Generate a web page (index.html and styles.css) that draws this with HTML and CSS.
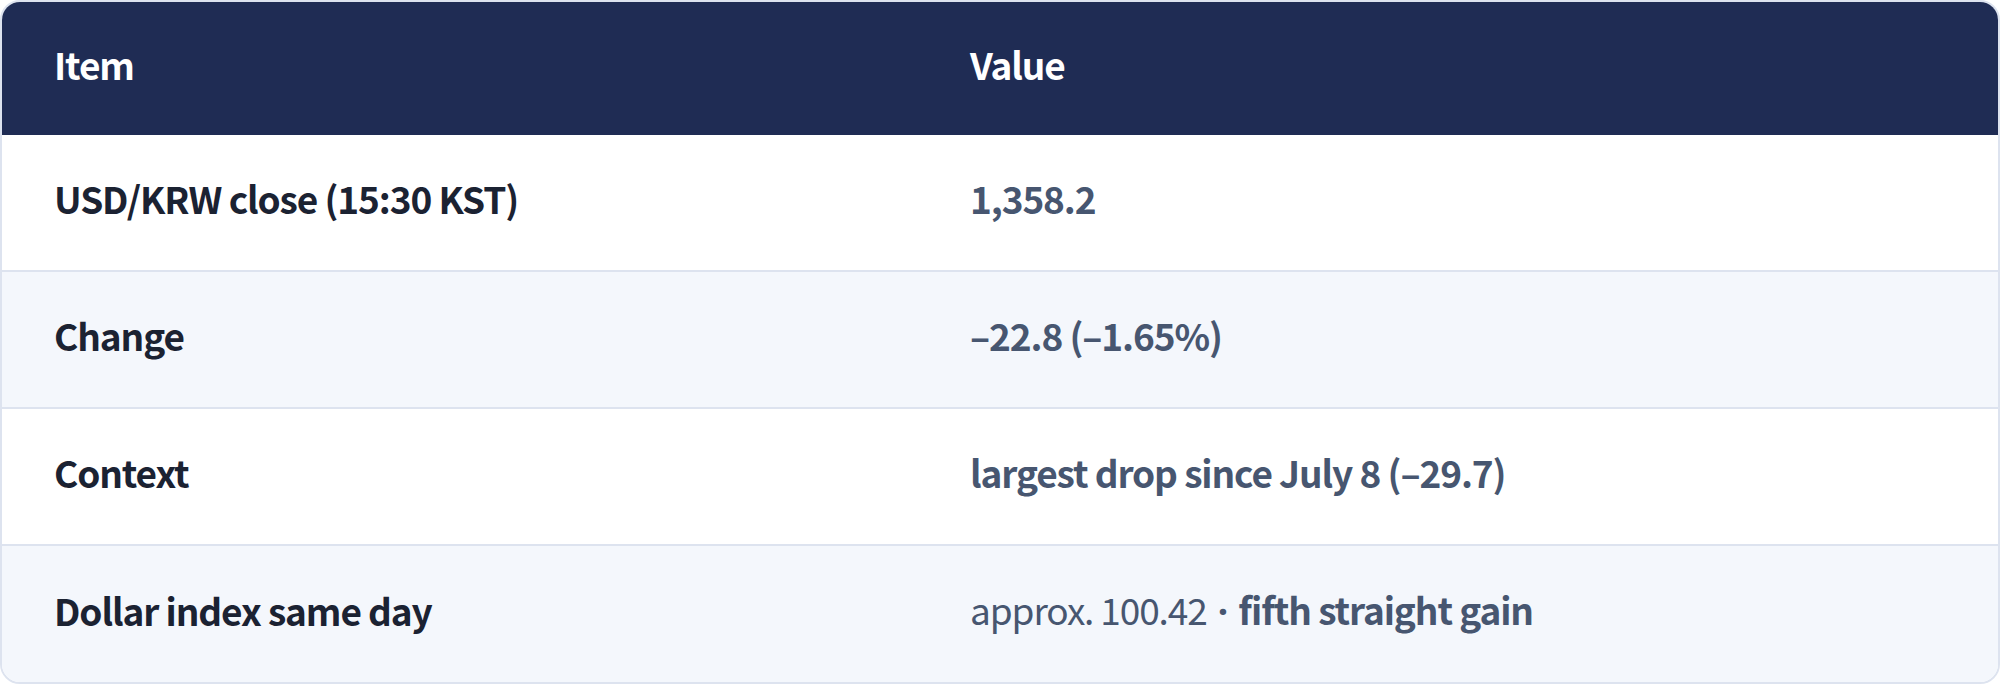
FILE: index.html
```html
<!DOCTYPE html>
<html lang="en">
<head>
<meta charset="utf-8">
<title>USD/KRW</title>
<link rel="stylesheet" href="styles.css">
</head>
<body>
<div class="card">
  <table class="data">
    <thead>
      <tr><th class="col-item">Item</th><th>Value</th></tr>
    </thead>
    <tbody>
      <tr><td class="item">USD/KRW close (15:30 KST)</td><td class="val strong">1,358.2</td></tr>
      <tr class="alt"><td class="item">Change</td><td class="val strong">–22.8 (–1.65%)</td></tr>
      <tr><td class="item">Context</td><td class="val strong">largest drop since July 8 (–29.7)</td></tr>
      <tr class="alt"><td class="item">Dollar index same day</td><td class="val">approx. 100.42 <span class="dot">·</span> <span class="strong">fifth straight gain</span></td></tr>
    </tbody>
  </table>
</div>
</body>
</html>
```
FILE: styles.css
```css
html, body {
  margin: 0;
  padding: 0;
  background: #ffffff;
}
body {
  font-family: "Noto Sans CJK KR", "Noto Sans", sans-serif;
}
.card {
  width: 2000px;
  height: 684px;
  box-sizing: border-box;
  border: 2px solid #dde3ef;
  border-radius: 20px;
  overflow: hidden;
}
.data {
  width: 100%;
  border-collapse: collapse;
  table-layout: fixed;
}
.data th {
  background: #1f2c54;
  color: #ffffff;
  font-weight: 700;
  font-size: 37px;
  line-height: 41px;
  letter-spacing: -1.1px;
  text-align: left;
  padding: 42px 0 50px 52px;
}
.data th.col-item {
  width: 864px;
}
.data td {
  font-size: 37px;
  line-height: 41px;
  letter-spacing: -1.1px;
  padding: 43px 0 51px 52px;
  border-top: 2px solid #dde3ef;
  background: #ffffff;
}
.data tr.alt td {
  background: #f4f7fc;
}
.data tbody tr:first-child td {
  border-top: none;
}
.item {
  color: #1b2232;
  font-weight: 700;
}
.val {
  color: #475670;
  font-weight: 400;
}
.strong {
  font-weight: 700;
}
.dot {
  font-family: "Noto Sans", sans-serif;
  font-weight: 700;
  margin: 0 4px;
}
```
